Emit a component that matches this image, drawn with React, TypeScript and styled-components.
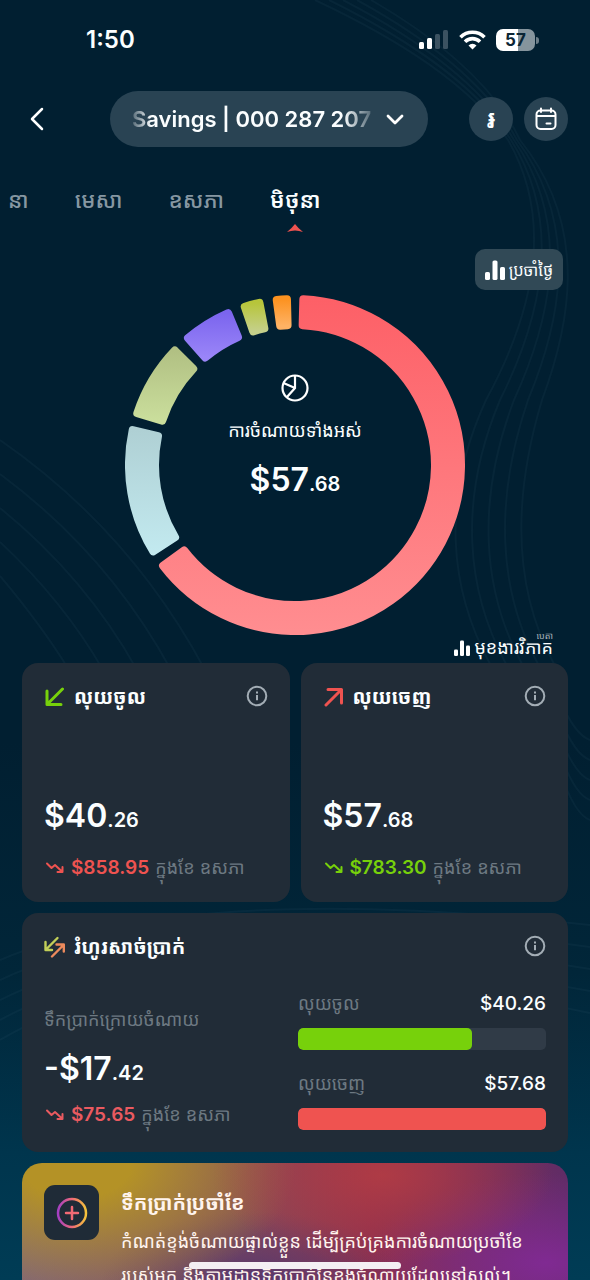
import React from "react";
import styled, { createGlobalStyle } from "styled-components";

const LATIN = `Inter, "Noto Sans Khmer", "Khmer OS", "Noto Sans", sans-serif`;
const colors = {
  white: "#fbfeff",
  muted: "#6d7982",
  red: "#ef5350",
  coral: "#ea5a60",
  green: "#77d10b",
  card: "#212c37",
};

const Global = createGlobalStyle`
  *, *::before, *::after { box-sizing: border-box; }
  body { margin: 0; background: #011f31; }
  button, a { font: inherit; color: inherit; background: none; border: 0; padding: 0; text-decoration: none; cursor: pointer; }
  h2, p { margin: 0; }
  svg { display: block; flex: none; }
`;

const Screen = styled.div`
  position: relative;
  height: 100vh;
  overflow: hidden;
  display: flex;
  flex-direction: column;
  color: ${colors.white};
  font-family: ${LATIN};
  background: linear-gradient(180deg, #011f31 0%, #011f31 58%, #012639 76%, #00354d 90%, #003c55 100%);
  & > * {
    flex-shrink: 0;
  }
`;

const Waves = styled.svg`
  position: absolute;
  inset: 0;
  width: 100%;
  height: 100%;
  fill: none;
  stroke: #4a7488;
  stroke-opacity: 0.09;
  stroke-width: 2;
`;

const StatusBar = styled.div`
  position: relative;
  display: flex;
  align-items: center;
  justify-content: space-between;
  height: 80px;
  padding: 0 55px 0 86px;
`;

const Clock = styled.span`
  font-size: 24px;
  line-height: 28px;
  font-weight: 600;
`;

const StatusIcons = styled.div`
  display: flex;
  align-items: center;
  gap: 10px;
`;

const Battery = styled.div`
  position: relative;
  width: 39px;
  height: 22px;
  border-radius: 7px;
  background: linear-gradient(90deg, #fff 57%, #85949d 57%);
  color: #0b2534;
  font-size: 17px;
  line-height: 22px;
  font-weight: 700;
  text-align: center;
  &::after {
    content: "";
    position: absolute;
    left: 40px;
    top: 8px;
    width: 3px;
    height: 7px;
    border-radius: 0 3px 3px 0;
    background: #6c7d88;
  }
`;

const Header = styled.header`
  position: relative;
  display: grid;
  grid-template-columns: 88px 1fr auto;
  align-items: center;
  padding: 11px 22px 0;
`;

const BackButton = styled.button`
  width: 30px;
  height: 44px;
  display: flex;
  align-items: center;
  justify-content: center;
`;

const AccountPill = styled.button`
  display: flex;
  align-items: center;
  justify-content: space-between;
  height: 56px;
  margin-right: 41px;
  border-radius: 28px;
  padding: 0 24px 0 22px;
  background: #294353;
`;

const AccountName = styled.span`
  flex: 1;
  min-width: 0;
  margin-right: 14px;
  overflow: hidden;
  white-space: nowrap;
  text-align: left;
  font-size: 22px;
  line-height: 32px;
  font-weight: 600;
  mask-image: linear-gradient(90deg, rgba(0, 0, 0, 0.2), #000 8%, #000 88%, rgba(0, 0, 0, 0.2));
`;

const HeaderActions = styled.div`
  display: flex;
  gap: 11px;
`;

const RoundButton = styled.button`
  display: grid;
  place-items: center;
  width: 44px;
  height: 44px;
  border-radius: 50%;
  background: #294353;
  font-size: 26px;
  line-height: 30px;
  font-weight: 600;
`;

const Months = styled.nav`
  position: relative;
  display: flex;
  align-items: flex-start;
  gap: 46px;
  height: 102px;
  padding: 36px 8px 0;
`;

const Month = styled.button<{ $active?: boolean }>`
  display: flex;
  flex-direction: column;
  align-items: center;
  gap: 7px;
  white-space: nowrap;
  font-size: 22px;
  line-height: 34px;
  font-weight: ${(p) => (p.$active ? 600 : 500)};
  color: ${(p) => (p.$active ? colors.white : "#8697a2")};
`;

const DailyRow = styled.div`
  position: relative;
  display: flex;
  justify-content: flex-end;
  padding-right: 27px;
`;

const DailyButton = styled.button`
  display: flex;
  align-items: center;
  justify-content: center;
  gap: 4px;
  width: 88px;
  height: 41px;
  border-radius: 10px;
  background: #314956;
  font-size: 16px;
  line-height: 28px;
  white-space: nowrap;
`;

const ChartArea = styled.section`
  position: relative;
  display: grid;
  justify-items: center;
  align-items: center;
  padding-top: 5px;
  & > * {
    grid-area: 1 / 1;
  }
`;

const ChartCenter = styled.div`
  display: flex;
  flex-direction: column;
  align-items: center;
  padding-bottom: 52px;
`;

const ChartLabel = styled.p`
  margin: 12px 0;
  font-size: 18px;
  line-height: 34px;
`;

const Amount = styled.p`
  font-size: 32px;
  line-height: 40px;
  font-weight: 600;
  white-space: nowrap;
`;

const Cents = styled.span`
  font-size: 20px;
`;

const AnalysisRow = styled.div`
  position: relative;
  display: flex;
  justify-content: flex-end;
  align-items: flex-start;
  height: 28px;
  padding-right: 37px;
`;

const AnalysisLink = styled.a`
  position: relative;
  display: flex;
  align-items: center;
  gap: 4px;
  font-size: 18px;
  line-height: 26px;
  white-space: nowrap;
`;

const Beta = styled.span`
  position: absolute;
  right: 0;
  top: -5px;
  font-size: 9px;
  line-height: 12px;
  color: #a9b5bd;
`;

const Cards = styled.main`
  position: relative;
  display: grid;
  grid-template-columns: 1fr 1fr;
  gap: 11px;
  padding: 0 22px;
`;

const Card = styled.section<{ $wide?: boolean }>`
  grid-column: ${(p) => (p.$wide ? "1 / -1" : "auto")};
  display: flex;
  flex-direction: column;
  justify-content: space-between;
  min-width: 0;
  min-height: 239px;
  padding: 16px 22px;
  border-radius: 16px;
  background: ${colors.card};
`;

const CardHead = styled.div`
  display: flex;
  align-items: center;
  gap: 9px;
`;

const CardTitle = styled.h2`
  flex: 1;
  font-size: 20px;
  line-height: 36px;
  font-weight: 700;
  white-space: nowrap;
`;

const InfoButton = styled.button`
  color: #a3adb5;
  height: 22px;
  align-self: flex-start;
  margin-top: 6px;
`;

const Trend = styled.p<{ $tone: string; $tight?: boolean }>`
  display: flex;
  align-items: center;
  gap: 6px;
  margin-top: ${(p) => (p.$tight ? 4 : 10)}px;
  font-size: 18px;
  line-height: 36px;
  white-space: nowrap;
  color: ${colors.muted};
  svg, b { color: ${(p) => p.$tone}; }
  b { font-size: 19px; font-weight: 600; }
`;

const FlowBody = styled.div`
  display: grid;
  grid-template-columns: 1fr 248px;
  align-items: end;
  padding-bottom: 3px;
`;

const FlowLabel = styled.p`
  margin-bottom: 12px;
  font-size: 18px;
  line-height: 34px;
  color: ${colors.muted};
`;

const Bars = styled.div`
  display: grid;
  gap: 20px;
  padding-bottom: 3px;
`;

const BarHead = styled.div`
  display: flex;
  justify-content: space-between;
  align-items: center;
  height: 28px;
  margin-bottom: 10px;
  font-size: 18px;
  line-height: 28px;
  color: ${colors.muted};
  b { color: ${colors.white}; font-size: 19px; font-weight: 500; }
`;

const Track = styled.div`
  height: 22px;
  border-radius: 5px;
  overflow: hidden;
  background: #303b47;
`;

const Fill = styled.div<{ $tone: string }>`
  height: 100%;
  border-radius: 5px;
  background: ${(p) => p.$tone};
`;

const Banner = styled.a`
  grid-column: 1 / -1;
  display: flex;
  align-items: flex-start;
  gap: 22px;
  min-height: 150px;
  padding: 22px;
  border-radius: 20px;
  color: #fff4ee;
  background:
    radial-gradient(ellipse 170px 90px at 66% 12px, rgba(178, 60, 68, 0.9), rgba(178, 60, 68, 0)),
    radial-gradient(ellipse 220px 140px at 10% 0, rgba(180, 146, 38, 1) 25%, rgba(180, 146, 38, 0)),
    radial-gradient(ellipse 150px 70px at 42% 118px, rgba(82, 52, 112, 0.9), rgba(82, 52, 112, 0)),
    radial-gradient(ellipse 180px 90px at 96% 100px, rgba(128, 42, 146, 1), rgba(128, 42, 146, 0)),
    linear-gradient(90deg, #7d627e 0%, #85505a 38%, #8f304e 64%, #602c66 100%);
`;

const BannerIcon = styled.div`
  display: grid;
  place-items: center;
  flex: none;
  width: 55px;
  height: 55px;
  border-radius: 11px;
  background: #1f2b37;
`;

const BannerTitle = styled.h2`
  font-size: 20px;
  line-height: 36px;
  font-weight: 700;
  white-space: nowrap;
`;

const BannerText = styled.p`
  font-size: 18px;
  line-height: 34px;
  padding-top: 4px;
  white-space: nowrap;
`;

const HomeIndicator = styled.div`
  position: absolute;
  bottom: 11px;
  left: 0;
  right: 0;
  width: 212px;
  height: 7px;
  margin: 0 auto;
  border-radius: 4px;
  background: #f4eff3;
`;

const segments = [
  { from: 1.5, to: 234, id: "food", top: "#fd6067", bottom: "#ff8d90" },
  { from: 237.3, to: 283.5, id: "transfer", top: "#afd0d4", bottom: "#c2e9ef" },
  { from: 286.8, to: 315, id: "shop", top: "#b1c083", bottom: "#cade9c" },
  { from: 318.5, to: 337.6, id: "bills", top: "#7b65ee", bottom: "#9a85f8" },
  { from: 341, to: 349, id: "fun", top: "#b7c53a", bottom: "#c5d08b" },
  { from: 352.3, to: 358.6, id: "other", top: "#fc9220", bottom: "#feb264" },
];

const ROUND = 4;

function ringPath(from: number, to: number) {
  const outer = 170 - ROUND;
  const inner = 136 + ROUND;
  const at = (radius: number, degrees: number, side: number) => {
    const a = (degrees * Math.PI) / 180 + (side * ROUND) / radius;
    return `${(170 + radius * Math.sin(a)).toFixed(2)} ${(170 - radius * Math.cos(a)).toFixed(2)}`;
  };
  const large = to - from > 180 ? 1 : 0;
  return `M${at(outer, from, 1)}A${outer} ${outer} 0 ${large} 1 ${at(outer, to, -1)}L${at(inner, to, -1)}A${inner} ${inner} 0 ${large} 0 ${at(inner, from, 1)}Z`;
}

function Donut() {
  return (
    <svg width="340" height="340" viewBox="0 0 340 340" aria-hidden="true">
      <defs>
        {segments.map((s) => (
          <linearGradient key={s.id} id={s.id} x1="0" y1="0" x2="0" y2="1">
            <stop offset="0" stopColor={s.top} />
            <stop offset="1" stopColor={s.bottom} />
          </linearGradient>
        ))}
      </defs>
      {segments.map((s) => (
        <path
          key={s.id}
          d={ringPath(s.from, s.to)}
          fill={`url(#${s.id})`}
          stroke={`url(#${s.id})`}
          strokeWidth={ROUND * 2}
          strokeLinejoin="round"
        />
      ))}
    </svg>
  );
}

function Background() {
  const steps = [0, 1, 2, 3, 4];
  return (
    <Waves viewBox="0 0 590 1280" preserveAspectRatio="none" aria-hidden="true">
      {steps.map((i) => (
        <path key={`a${i}`} d={`M${315 + i * 14} 0C${400 + i * 10} 40 ${470 + i * 6} 85 ${508 + i * 3} 140C${560 + i * 8} 230 ${524 + i * 11} 330 ${486 + i * 14} 400C${440 + i * 18} 500 ${450 + i * 16} 590 ${490 + i * 16} 664`} />
      ))}
      {steps.map((i) => (
        <path key={`b${i}`} d={`M0 ${440 + i * 34}Q${130 - i * 22} ${530 + i * 24} ${205 - i * 34} 670`} />
      ))}
      {steps.map((i) => (
        <path key={`c${i}`} d={`M560 ${700 + i * 18}Q575 ${735 + i * 20} 590 ${740 + i * 20}M0 ${960 + i * 20}Q190 ${880 + i * 12} 590 ${925 + i * 22}`} />
      ))}
    </Waves>
  );
}

function InfoIcon() {
  return (
    <svg width="22" height="22" viewBox="0 0 22 22" fill="none" stroke="currentColor" strokeWidth="2">
      <circle cx="11" cy="11" r="9.3" />
      <path d="M11 10v5.2M11 6.6v2" />
    </svg>
  );
}

function BarsIcon({ size }: { size: number }) {
  return (
    <svg width={size} height={size} viewBox="0 0 20 20" fill="#fff">
      <rect x="0" y="12" width="5" height="8" rx="1.6" />
      <rect x="7.500" y="0.500" width="5" height="19.500" rx="1.6" />
      <rect x="15" y="7" width="5" height="13" rx="1.6" />
    </svg>
  );
}

function TrendIcon() {
  return (
    <svg width="21" height="14" viewBox="0 0 21 14" fill="none" stroke="currentColor" strokeWidth="2" strokeLinecap="round" strokeLinejoin="round">
      <path d="M3 2.500l4.500 4.500 3.500-3L18 10.500M18.500 6V11h-5" />
    </svg>
  );
}

function ArrowIcon({ out }: { out?: boolean }) {
  return (
    <svg width="21" height="20" viewBox="0 0 21 20" fill="none" stroke={out ? colors.red : colors.green} strokeWidth="3" strokeLinecap="round" strokeLinejoin="round">
      <path d={out ? "M3 18L18 3M5 2.500H18.500V16" : "M18.500 2L4 16.500M3 4V17.500H17"} />
    </svg>
  );
}

function FlowIcon() {
  return (
    <svg width="21" height="22" viewBox="0 0 21 22" fill="none" strokeWidth="2.400" strokeLinecap="round" strokeLinejoin="round">
      <path d="M13.500 2L2 13.500M1.500 6V14H8" stroke="#c2cf58" />
      <path d="M8 20.500L19.500 9M12.500 8.500H19.800V15.500" stroke="#ec8a5c" />
    </svg>
  );
}

function Money({ whole, cents }: { whole: string; cents: string }) {
  return (
    <Amount>
      {whole}
      <Cents>.{cents}</Cents>
    </Amount>
  );
}

function TrendLine({ tone, value, tight }: { tone: string; value: string; tight?: boolean }) {
  return (
    <Trend $tone={tone} $tight={tight}>
      <TrendIcon />
      <b>{value}</b>
      <span>ក្នុងខែ ឧសភា</span>
    </Trend>
  );
}

function SummaryCard({ title, out, cents, whole, trend, tone }: { title: string; out?: boolean; cents: string; whole: string; trend: string; tone: string }) {
  return (
    <Card>
      <CardHead>
        <ArrowIcon out={out} />
        <CardTitle>{title}</CardTitle>
        <InfoButton aria-label="Info"><InfoIcon /></InfoButton>
      </CardHead>
      <div>
        <Money whole={whole} cents={cents} />
        <TrendLine tone={tone} value={trend} />
      </div>
    </Card>
  );
}

function Bar({ label, value, percent, tone }: { label: string; value: string; percent: number; tone: string }) {
  return (
    <div>
      <BarHead>
        <span>{label}</span>
        <b>{value}</b>
      </BarHead>
      <Track>
        <Fill $tone={tone} style={{ width: `${percent}%` }} />
      </Track>
    </div>
  );
}

export default function App() {
  return (
    <Screen lang="km">
      <Global />
      <Background />
      <StatusBar>
        <Clock>1:50</Clock>
        <StatusIcons>
          <svg width="30" height="20" viewBox="0 0 30 20" fill="#fff">
            <rect x="0" y="12" width="5" height="7" rx="1.500" />
            <rect x="8" y="8" width="5" height="11" rx="1.500" />
            <rect x="16" y="4" width="5" height="15" rx="1.500" fill="#3b5261" />
            <rect x="24" y="0" width="5" height="19" rx="1.500" fill="#3b5261" />
          </svg>
          <svg width="27" height="20" viewBox="0 0 27 20" fill="none" stroke="#fff" strokeWidth="3.600">
            <path d="M1.500 7.200a17 17 0 0 1 24 0M6 11.700a10.600 10.600 0 0 1 15 0" />
            <path d="M13.500 19.500l-4-4a5.700 5.700 0 0 1 8 0z" fill="#fff" stroke="none" />
          </svg>
          <Battery>57</Battery>
        </StatusIcons>
      </StatusBar>

      <Header>
        <BackButton aria-label="Back">
          <svg width="16" height="24" viewBox="0 0 16 24" fill="none" stroke="#fff" strokeWidth="2.500" strokeLinecap="round" strokeLinejoin="round">
            <path d="M13 2L3 12l10 10" />
          </svg>
        </BackButton>
        <AccountPill>
          <AccountName>Savings | 000 287 207</AccountName>
          <svg width="18" height="12" viewBox="0 0 18 12" fill="none" stroke="#fff" strokeWidth="2.800" strokeLinecap="round" strokeLinejoin="round">
            <path d="M2 3l7 7 7-7" />
          </svg>
        </AccountPill>
        <HeaderActions>
          <RoundButton aria-label="Currency">៛</RoundButton>
          <RoundButton aria-label="Calendar">
            <svg width="22" height="24" viewBox="0 0 22 24" fill="none" stroke="#fff" strokeWidth="2" strokeLinecap="round">
              <rect x="1.500" y="3.500" width="19" height="18.500" rx="4" />
              <path d="M2 9h18M6 1.500v3.500M16 1.500v3.500M11.500 16.500h4" />
            </svg>
          </RoundButton>
        </HeaderActions>
      </Header>

      <Months>
        <Month>នា</Month>
        <Month>មេសា</Month>
        <Month>ឧសភា</Month>
        <Month $active>
          មិថុនា
          <svg width="16" height="8" viewBox="0 0 16 8" fill={colors.red}>
            <path d="M8 0Q11 4 16 8Q8 5 0 8Q5 4 8 0Z" />
          </svg>
        </Month>
      </Months>

      <DailyRow>
        <DailyButton>
          <BarsIcon size={20} />
          ប្រចាំថ្ងៃ
        </DailyButton>
      </DailyRow>

      <ChartArea>
        <Donut />
        <ChartCenter>
          <svg width="28" height="28" viewBox="0 0 28 28" fill="none" stroke="#fff" strokeWidth="2.200">
            <circle cx="14" cy="14" r="12.500" />
            <path d="M14 1.500V14L6 23M14 14L2.500 9" />
          </svg>
          <ChartLabel>ការចំណាយទាំងអស់</ChartLabel>
          <Money whole="$57" cents="68" />
        </ChartCenter>
      </ChartArea>

      <AnalysisRow>
        <AnalysisLink href="#analysis">
          <BarsIcon size={16} />
          មុខងារវិភាគ
          <Beta>បេតា</Beta>
        </AnalysisLink>
      </AnalysisRow>

      <Cards>
        <SummaryCard title="លុយចូល" whole="$40" cents="26" trend="$858.95" tone={colors.red} />
        <SummaryCard title="លុយចេញ" out whole="$57" cents="68" trend="$783.30" tone={colors.green} />
        <Card $wide>
          <CardHead>
            <FlowIcon />
            <CardTitle>រំហូរសាច់ប្រាក់</CardTitle>
            <InfoButton aria-label="Info"><InfoIcon /></InfoButton>
          </CardHead>
          <FlowBody>
            <div>
              <FlowLabel>ទឹកប្រាក់ក្រោយចំណាយ</FlowLabel>
              <Money whole="-$17" cents="42" />
              <TrendLine tone={colors.coral} value="$75.65" tight />
            </div>
            <Bars>
              <Bar label="លុយចូល" value="$40.26" percent={70} tone={colors.green} />
              <Bar label="លុយចេញ" value="$57.68" percent={100} tone={colors.red} />
            </Bars>
          </FlowBody>
        </Card>
        <Banner href="#budget">
          <BannerIcon>
            <svg width="32" height="32" viewBox="0 0 32 32" fill="none" strokeLinecap="round">
              <defs>
                <linearGradient id="ring" x1="0" y1="0" x2="1" y2="0">
                  <stop offset="0" stopColor="#a43fc4" />
                  <stop offset="0.500" stopColor="#ef6a76" />
                  <stop offset="1" stopColor="#f4c33b" />
                </linearGradient>
              </defs>
              <circle cx="16" cy="16" r="14" stroke="url(#ring)" strokeWidth="2.500" />
              <path d="M16 10v12M10 16h12" stroke="#f26a74" strokeWidth="2.500" />
            </svg>
          </BannerIcon>
          <div>
            <BannerTitle>ទឹកប្រាក់ប្រចាំខែ</BannerTitle>
            <BannerText>
              កំណត់ខ្ទង់ចំណាយផ្ទាល់ខ្លួន ដើម្បីគ្រប់គ្រងការចំណាយប្រចាំខែ
              <br />
              របស់អ្នក និងតាមដានទឹកប្រាក់នៃខ្ទង់ចំណាយដែលនៅសល់។
            </BannerText>
          </div>
        </Banner>
      </Cards>
      <HomeIndicator />
    </Screen>
  );
}
